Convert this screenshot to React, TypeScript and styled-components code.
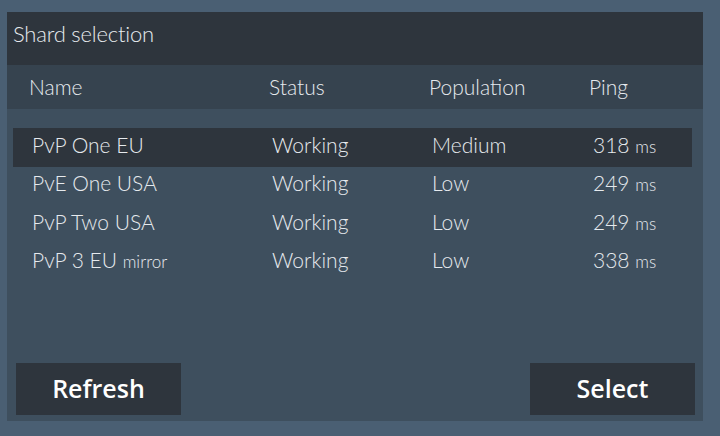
import { FC } from "react";
import styled, { createGlobalStyle } from "styled-components";

const COLORS = {
  page: "#4a5f73",
  panel: "#3e4f5e",
  dark: "#2e353d",
  header: "#36434f",
  text: "#e6eaee",
};

const shards = [
  { name: "PvP One EU", status: "Working", population: "Medium", ping: 318 },
  { name: "PvE One USA", status: "Working", population: "Low", ping: 249 },
  { name: "PvP Two USA", status: "Working", population: "Low", ping: 249 },
  { name: "PvP 3 EU mirror", status: "Working", population: "Low", ping: 338 },
];

const GlobalStyle = createGlobalStyle`
  html, body {
    margin: 0;
    padding: 0;
    background: ${COLORS.page};
    width: 720px;
    height: 436px;
    overflow: hidden;
  }
`;

const Page = styled.div`
  padding: 12px 17px 15px 7px;
  font-family: Lato, "DejaVu Sans", sans-serif;
  font-weight: 300;
  color: ${COLORS.text};
`;

const Panel = styled.div`
  background: ${COLORS.panel};
  height: 409px;
  display: flex;
  flex-direction: column;
`;

const TitleBar = styled.div`
  background: ${COLORS.dark};
  height: 53px;
  display: flex;
  align-items: center;
  padding-left: 6px;
  padding-bottom: 10px;
  box-sizing: border-box;
  font-size: 22px;
  letter-spacing: -0.2px;
`;

const Columns = styled.div`
  display: grid;
  grid-template-columns: 240px 160px 160px 1fr;
  align-items: center;
`;

const HeaderRow = styled(Columns)`
  background: ${COLORS.header};
  height: 44px;
  padding-left: 22px;
  padding-bottom: 2px;
  box-sizing: border-box;
  font-size: 21px;
`;

const Body = styled.div`
  flex: 1;
  padding: 19px 11px 0 6px;
`;

const Row = styled(Columns)<{ $selected?: boolean }>`
  height: 38.5px;
  padding-left: 19px;
  padding-bottom: 6px;
  box-sizing: border-box;
  font-size: 21px;
  background: ${(p) => (p.$selected ? COLORS.dark : "transparent")};
`;

const Ping = styled.span`
  padding-left: 1px;
  small {
    font-size: 17px;
  }
`;

const Mirror = styled.span`
  font-size: 17px;
`;

const Footer = styled.div`
  display: flex;
  justify-content: space-between;
  padding: 0 8px 6px 9px;
`;

const Button = styled.button`
  width: 165px;
  height: 52px;
  border: none;
  background: ${COLORS.dark};
  color: #ffffff;
  font-family: "Open Sans", "Noto Sans", sans-serif;
  font-weight: 600;
  font-size: 25px;
  cursor: pointer;
  padding: 0 0 3px;
`;

const ShardName: FC<{ name: string }> = ({ name }) => {
  if (name.endsWith(" mirror")) {
    return (
      <span>
        {name.replace(" mirror", " ")}
        <Mirror>mirror</Mirror>
      </span>
    );
  }
  return <span>{name}</span>;
};

export default function App() {
  return (
    <>
      <GlobalStyle />
      <Page>
        <Panel>
          <TitleBar>Shard selection</TitleBar>
          <HeaderRow>
            <span>Name</span>
            <span>Status</span>
            <span>Population</span>
            <span>Ping</span>
          </HeaderRow>
          <Body>
            {shards.map((s, i) => (
              <Row key={s.name} $selected={i === 0}>
                <ShardName name={s.name} />
                <span>{s.status}</span>
                <span>{s.population}</span>
                <Ping>
                  {s.ping} <small>ms</small>
                </Ping>
              </Row>
            ))}
          </Body>
          <Footer>
            <Button>Refresh</Button>
            <Button>Select</Button>
          </Footer>
        </Panel>
      </Page>
    </>
  );
}
